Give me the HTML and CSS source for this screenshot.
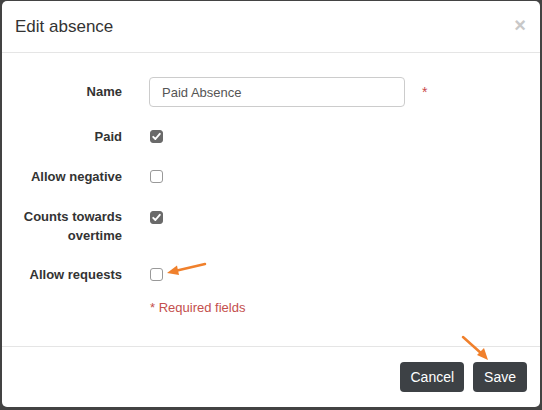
FILE: index.html
```html
<!DOCTYPE html>
<html>
<head>
    <title>Edit absence</title>
    <link rel="stylesheet" href="styles.css">
</head>
<body>
    <div class="modal">
        <div class="modal-header">
            <h4 class="modal-title">Edit absence</h4>
            <span class="close">&times;</span>
        </div>

        <div class="modal-body">
            <div class="form-row">
                <label class="form-label">Name</label>
                <div class="form-control-wrap">
                    <input class="text-input" type="text" value="Paid Absence">
                    <span class="required-mark">*</span>
                </div>
            </div>
            <div class="form-row">
                <label class="form-label">Paid</label>
                <span class="check checked">
                    <svg viewBox="0 0 13 13" width="13" height="13"><path d="M3.2 6.8 L5.4 9 L9.8 3.8" fill="none" stroke="#fff" stroke-width="1.9" stroke-linecap="round" stroke-linejoin="round"/></svg>
                </span>
            </div>
            <div class="form-row">
                <label class="form-label">Allow negative</label>
                <span class="check"></span>
            </div>
            <div class="form-row">
                <label class="form-label two-line">Counts towards overtime</label>
                <span class="check checked">
                    <svg viewBox="0 0 13 13" width="13" height="13"><path d="M3.2 6.8 L5.4 9 L9.8 3.8" fill="none" stroke="#fff" stroke-width="1.9" stroke-linecap="round" stroke-linejoin="round"/></svg>
                </span>
            </div>
            <div class="form-row">
                <label class="form-label">Allow requests</label>
                <span class="check"></span>
            </div>
            <div class="form-row required-row">
                <span class="required-note">* Required fields</span>
            </div>
        </div>

        <div class="modal-footer">
            <button class="btn">Cancel</button>
            <button class="btn btn-save">Save</button>
        </div>
    </div>

    <!-- annotation arrows -->
    <svg class="arrows" width="542" height="410" viewBox="0 0 542 410">
        <line x1="205" y1="264" x2="175" y2="271" stroke="#f0802c" stroke-width="2.5" stroke-linecap="round"/>
        <polygon points="167,273 177,265.5 179,275" fill="#f0802c"/>
        <line x1="463" y1="337" x2="482" y2="354" stroke="#f0802c" stroke-width="2.5" stroke-linecap="round"/>
        <polygon points="488,360 477,355 484,348" fill="#f0802c"/>
    </svg>
</body>
</html>
```

FILE: styles.css
```css
body {
    margin: 0;
    padding: 0;
    background-color: #434343;
    font-family: "Liberation Sans", Arial, sans-serif;
    color: #333;
    height: 410px;
    overflow: hidden;
}
.modal {
    margin: 1px 2px 0 2px;
    background-color: #fff;
    border-radius: 5px;
}
.modal-header {
    display: flex;
    justify-content: space-between;
    align-items: flex-start;
    padding: 16px 14px 15px 13px;
    border-bottom: 1px solid #e5e5e5;
}
.modal-title {
    margin: 0;
    font-size: 17px;
    font-weight: normal;
    line-height: 20px;
    color: #333;
}
.close {
    font-size: 20px;
    font-weight: bold;
    line-height: 14px;
    margin-top: 1px;
    color: #c8c8c8;
}
.modal-body {
    padding: 24px 0 28px 0;
}
.form-row {
    display: flex;
    align-items: flex-start;
    margin-bottom: 20px;
}
.form-label {
    width: 120px;
    text-align: right;
    font-size: 13px;
    font-weight: bold;
    line-height: 20px;
}
.form-label.two-line {
    line-height: 19px;
}
.form-row:first-child .form-label {
    line-height: 30px;
}
.form-control-wrap {
    display: flex;
    align-items: flex-start;
    margin-left: 27px;
}
.text-input {
    box-sizing: border-box;
    width: 256px;
    height: 30px;
    padding: 0 12px;
    border: 1px solid #ccc;
    border-radius: 4px;
    font-family: inherit;
    font-size: 13px;
    color: #555;
    outline: none;
}
.required-mark {
    margin-left: 17px;
    margin-top: 7px;
    color: #c9494a;
    font-size: 14px;
}
.check {
    box-sizing: border-box;
    display: block;
    width: 13px;
    height: 13px;
    margin-left: 28px;
    margin-top: 3px;
    border: 1px solid #999;
    border-radius: 3px;
    background-color: #fff;
}
.check.checked {
    border-color: #6a6a6a;
    background-color: #6a6a6a;
}
.check svg {
    display: block;
    margin: -1px;
}
.form-label.two-line + .check {
    margin-top: 4px;
}
.required-row {
    margin-top: -7px;
    margin-bottom: 0;
}
.required-note {
    margin-left: 148px;
    font-size: 13px;
    line-height: 20px;
    color: #c44f4d;
}
.modal-footer {
    display: flex;
    justify-content: flex-end;
    gap: 9px;
    padding: 15px 13px 15px 0;
    border-top: 1px solid #e5e5e5;
}
.btn {
    height: 30px;
    padding: 0 10px;
    border: none;
    border-radius: 4px;
    background-color: #3d4145;
    color: #fff;
    font-family: inherit;
    font-size: 14px;
}
.btn-save {
    padding: 0 11px;
}
.arrows {
    position: absolute;
    left: 0;
    top: 0;
    pointer-events: none;
}
```
